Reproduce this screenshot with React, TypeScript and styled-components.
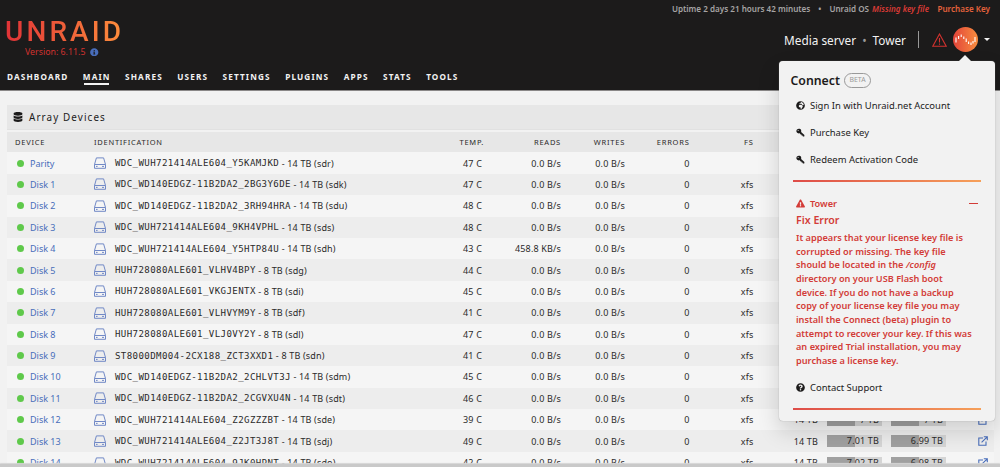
import React from 'react';
import styled, { createGlobalStyle, css } from 'styled-components';
import { FaDatabase, FaInfoCircle, FaExclamationTriangle, FaQuestionCircle, FaGlobeAfrica } from 'react-icons/fa';

interface Disk {
  name: string;
  model: string;
  info: string;
  temp: number;
  reads?: string;
  fs?: string;
  size?: string;
  used?: string;
  free?: string;
}

const disks: Disk[] = [
  { name: 'Parity', model: 'WDC_WUH721414ALE604_Y5KAMJKD', info: '14 TB (sdr)', temp: 47, fs: '' },
  { name: 'Disk 1', model: 'WDC_WD140EDGZ-11B2DA2_2BG3Y6DE', info: '14 TB (sdk)', temp: 47 },
  { name: 'Disk 2', model: 'WDC_WD140EDGZ-11B2DA2_3RH94HRA', info: '14 TB (sdu)', temp: 48 },
  { name: 'Disk 3', model: 'WDC_WUH721414ALE604_9KH4VPHL', info: '14 TB (sds)', temp: 48 },
  { name: 'Disk 4', model: 'WDC_WUH721414ALE604_Y5HTP84U', info: '14 TB (sdh)', temp: 43, reads: '458.8 KB/s' },
  { name: 'Disk 5', model: 'HUH728080ALE601_VLHV4BPY', info: '8 TB (sdg)', temp: 44 },
  { name: 'Disk 6', model: 'HUH728080ALE601_VKGJENTX', info: '8 TB (sdi)', temp: 45 },
  { name: 'Disk 7', model: 'HUH728080ALE601_VLHVYM9Y', info: '8 TB (sdf)', temp: 41 },
  { name: 'Disk 8', model: 'HUH728080ALE601_VLJ0VY2Y', info: '8 TB (sdl)', temp: 47 },
  { name: 'Disk 9', model: 'ST8000DM004-2CX188_ZCT3XXD1', info: '8 TB (sdn)', temp: 41 },
  { name: 'Disk 10', model: 'WDC_WD140EDGZ-11B2DA2_2CHLVT3J', info: '14 TB (sdm)', temp: 45 },
  { name: 'Disk 11', model: 'WDC_WD140EDGZ-11B2DA2_2CGVXU4N', info: '14 TB (sdt)', temp: 46 },
  { name: 'Disk 12', model: 'WDC_WUH721414ALE604_Z2GZZZBT', info: '14 TB (sde)', temp: 39, size: '14 TB', used: '7 TB', free: '7 TB' },
  { name: 'Disk 13', model: 'WDC_WUH721414ALE604_Z2JT3J8T', info: '14 TB (sdj)', temp: 49, size: '14 TB', used: '7.01 TB', free: '6.99 TB' },
  { name: 'Disk 14', model: 'WDC_WUH721414ALE604_9JK0HPNT', info: '14 TB (sdo)', temp: 42, size: '14 TB', used: '7.02 TB', free: '6.98 TB' },
];

const menu = ['Dashboard', 'Main', 'Shares', 'Users', 'Settings', 'Plugins', 'Apps', 'Stats', 'Tools'];

const GlobalStyle = createGlobalStyle`
  * {
    box-sizing: border-box;
  }

  body {
    margin: 0;
    background: #f2f2f2;
    color: #1c1b1b;
    font-family: 'Noto Sans', 'Open Sans', sans-serif;
    font-size: 9px;
    overflow: hidden;
  }
`;

const Page = styled.div`
  position: relative;
  height: 467px;
  overflow: hidden;
  display: flex;
  flex-direction: column;
`;

const Header = styled.header`
  flex: none;
  height: 91px;
  background: #1c1b1b;
  border-bottom: 1px solid #8a8888;
  display: flex;
  justify-content: space-between;
`;

const Brand = styled.div`
  padding: 14px 0 0 5px;
  display: flex;
  flex-direction: column;
`;

const Logo = styled.div`
  width: 122px;
  height: 32px;
  font-family: Roboto, sans-serif;
  font-size: 28px;
  font-weight: 500;
  line-height: 36px;
  letter-spacing: 3.1px;
  white-space: nowrap;
  color: transparent;
  background: linear-gradient(90deg, #e03237, #fd8c3c 95%);
  background-clip: text;
  -webkit-background-clip: text;
`;

const Version = styled.div`
  display: flex;
  align-items: center;
  gap: 5px;
  height: 12px;
  padding-left: 20px;
  font-size: 8.8px;
  color: #d1322f;

  svg {
    color: #486dba;
  }
`;

const Nav = styled.nav`
  display: flex;
  gap: 14.4px;
  margin-top: 12px;
  padding-left: 2px;
`;

const NavItem = styled.a<{ $active?: boolean }>`
  position: relative;
  font-size: 8.2px;
  font-weight: 700;
  line-height: 13px;
  letter-spacing: 1.15px;
  text-transform: uppercase;
  color: #f2f2f2;

  ${props => props.$active && css`
    &::after {
      content: '';
      position: absolute;
      left: 1.5px;
      right: 2px;
      bottom: -2px;
      height: 2px;
      background: #f2f2f2;
    }
  `}
`;

const Account = styled.div`
  display: flex;
  flex-direction: column;
  align-items: flex-end;
`;

const Uptime = styled.div`
  display: flex;
  align-items: center;
  height: 17px;
  padding-right: 10px;
  font-size: 8.1px;
  font-weight: 600;
  color: #a6a4a4;

  em {
    margin-left: 3px;
    color: #d83a35;
  }

  a {
    margin-left: 8.5px;
    color: #e3623c;
  }
`;

const Bullet = styled.span`
  margin: 0 8px;
`;

const ServerRow = styled.div`
  display: flex;
  align-items: center;
  height: 45px;
  padding-right: 10px;
  font-size: 11.8px;
  color: #f2f2f2;
`;

const Separator = styled.i`
  width: 1.5px;
  height: 17px;
  margin: 0 13px 0 11.5px;
  background: #999;
`;

const Dot = styled.span`
  margin: 0 6px;
  color: #999;
`;

const Avatar = styled.div`
  width: 25px;
  height: 25px;
  margin: 0 6px 0 6px;
  border-radius: 50%;
  background: linear-gradient(90deg, #e2443a, #f88d3e);
  display: flex;
  align-items: center;
  justify-content: center;
`;

const Caret = styled.i`
  border: 3px solid transparent;
  border-top: 3.5px solid #f2f2f2;
  border-bottom: 0;
`;

const Content = styled.main`
  flex: 1;
  min-height: 0;
  overflow: hidden;
  padding: 14px 6px 0 7px;
`;

const Title = styled.div`
  display: flex;
  align-items: center;
  gap: 6px;
  height: 25px;
  padding-left: 6px;
  margin-bottom: 2px;
  background: #e7e7e7;
  border-bottom: 1px solid #e1e1e1;
  font-size: 9.9px;
  letter-spacing: 1.1px;
`;

const Row = styled.div<{ $even?: boolean }>`
  display: grid;
  grid-template-columns: 87px 306px 82px 79px 64px 64.5px 64px 64.5px 64px 64px 1fr;
  align-items: center;
  height: 21.4px;
  letter-spacing: 0.16px;
  color: #2b2a2a;
  background: ${props => (props.$even ? '#ededed' : '#f5f5f5')};
`;

const HeadRow = styled(Row)`
  height: 20.4px;
  padding-bottom: 1px;
  background: #e7e7e7;
  font-size: 7.5px;
  letter-spacing: 0.75px;
  text-transform: uppercase;
`;

const Cell = styled.span<{ $right?: boolean }>`
  white-space: nowrap;
  text-align: ${props => (props.$right ? 'right' : 'left')};
`;

const HeadDevice = styled(Cell)`
  padding-left: 8px;
`;

const HeadTemp = styled(Cell)`
  margin-right: -2px;
`;

const Device = styled.div`
  display: flex;
  align-items: center;
  gap: 6px;
  padding-left: 10px;
  letter-spacing: 0;
  color: #486dba;
`;

const Online = styled.i`
  width: 7px;
  height: 7px;
  border-radius: 50%;
  background: #5fc94b;
`;

const Ident = styled.div`
  display: flex;
  align-items: center;
  white-space: pre;

  svg {
    margin-right: 9px;
  }
`;

const Model = styled.span`
  font-family: 'DejaVu Sans Mono', monospace;
  font-size: 9.1px;
  letter-spacing: 0.39px;
`;

const Usage = styled.div`
  width: 55.5px;
  height: 12px;
  margin-left: 8.5px;
  padding-right: 3px;
  background: linear-gradient(90deg, #a0a0a0 50%, #d5d5d5 50%);
  line-height: 12px;
  text-align: right;
`;

const ViewLink = styled.a`
  display: flex;
  justify-content: flex-end;
  padding-right: 6px;
`;

const Footer = styled.footer`
  flex: none;
  height: 3px;
  background: #c9c9c9;
  box-shadow: 0 -1px 1px #d5d5d5;
`;

const Dropdown = styled.aside`
  position: absolute;
  left: 779px;
  top: 61px;
  width: 216px;
  height: 360px;
  padding: 10px 14px 0;
  border-radius: 4px;
  background: #f2f2f2;
  box-shadow: 0 0 1px #888, 0 10px 22px rgba(0, 0, 0, 0.16);

  &::before {
    content: '';
    position: absolute;
    right: 24px;
    top: -6px;
    border: 6px solid transparent;
    border-top: 0;
    border-bottom-color: #f2f2f2;
  }
`;

const Connect = styled.h2`
  display: flex;
  align-items: center;
  gap: 4px;
  height: 19px;
  margin: 0 0 0 -2.5px;
  font-size: 12.3px;
  font-weight: 600;
`;

const Beta = styled.span`
  height: 15px;
  padding: 0 4.5px;
  border: 1.5px solid #999;
  border-radius: 8px;
  font-size: 6.9px;
  font-weight: 400;
  line-height: 12px;
  color: #999;
`;

const MenuItem = styled.a`
  display: flex;
  align-items: center;
  gap: 5px;
  height: 27px;
  padding-left: 3px;
  font-size: 9.45px;
`;

const MenuList = styled.div`
  padding-top: 2px;
`;

const Divider = styled.hr`
  height: 2px;
  margin: 7px 0 0;
  border: 0;
  background: linear-gradient(90deg, #de4c48, #f6a05a);
`;

const ErrorBox = styled.section`
  padding: 14px 3px 0;
  color: #d33c38;
  font-weight: 600;
`;

const ErrorHead = styled.div`
  display: flex;
  align-items: center;
  gap: 5px;
  height: 14px;
  font-size: 9.2px;
`;

const Minus = styled.i`
  width: 9px;
  height: 1px;
  margin-left: auto;
  background: #d33c38;
`;

const ErrorTitle = styled.h3`
  margin: 2px 0;
  font-size: 10.6px;
  font-weight: 600;
  line-height: 17px;
`;

const ErrorText = styled.p`
  margin: 0 0 6px;
  font-size: 9.2px;
  line-height: 13.65px;
  white-space: nowrap;
`;

const DiskIcon = () => (
  <svg width="12" height="12" viewBox="0 0 12 12" fill="none" stroke="#7189c6" strokeWidth="1">
    <path d="M0.5 7.5 2.4 0.9H9.6L11.5 7.5V11.3H0.5ZM0.5 7.5H11.5M2 9.4H3.6M8 9.4H10" />
  </svg>
);

const ExternalIcon = () => (
  <svg width="10" height="10" viewBox="0 0 10 10" fill="none" stroke="#486dba" strokeWidth="1.1">
    <path d="M5 2H0.8V9.3H8V5.5M3.6 6.4 9.2 0.8M5.8 0.7H9.3V4.2" />
  </svg>
);

const KeyIcon = () => (
  <svg width="9" height="9" viewBox="0 0 9 9">
    <path d="M1 1.5C2.2.3 4.3.5 5 1.8c.4.8.3 1.5.1 2.1L8.4 7 8.3 8.4 6.9 8.5 6.5 7.6 5.6 7.5 5.4 6.6 4.6 6.4 3.8 5.3C2.5 5.7 1.1 5.2.6 4 .2 3.1.4 2.1 1 1.5Z" fill="#1c1b1b" />
    <circle cx="2.1" cy="2.4" r="0.5" fill="#f2f2f2" />
  </svg>
);

const AlertIcon = () => (
  <svg width="15" height="14" viewBox="0 0 15 14" fill="none" stroke="#d1322f" strokeWidth="1.1">
    <path d="M7.5 1 14.2 13.2H0.8ZM7.5 5V9.6M7.5 10.6V11.7" />
  </svg>
);

const WaveIcon = () => (
  <svg width="21" height="14" viewBox="0 0 21 14" stroke="#fff" strokeWidth="1.1">
    <path d="M1 4.5V9.5M3.6 3V6M6.2 1.5V4M8.8 3.5V6M11.2 5.5V9M13.6 8.5V11M16 9.5V12M18 8V10.5M20 4V9" />
  </svg>
);

const App: React.FC = () => {
  return (
    <Page>
      <GlobalStyle />
      <Header>
        <Brand>
          <Logo>UNRAID</Logo>
          <Version>
            Version: 6.11.5
            <FaInfoCircle size={8.5} />
          </Version>
          <Nav>
            {menu.map(item => (
              <NavItem key={item} $active={item === 'Main'}>{item}</NavItem>
            ))}
          </Nav>
        </Brand>
        <Account>
          <Uptime>
            Uptime 2 days 21 hours 42 minutes
            <Bullet>•</Bullet>
            Unraid OS
            <em>Missing key file</em>
            <a>Purchase Key</a>
          </Uptime>
          <ServerRow>
            Media server
            <Dot>•</Dot>
            Tower
            <Separator />
            <AlertIcon />
            <Avatar>
              <WaveIcon />
            </Avatar>
            <Caret />
          </ServerRow>
        </Account>
      </Header>

      <Content>
        <Title>
          <FaDatabase size={10} />
          Array Devices
        </Title>
        <HeadRow>
          <HeadDevice>Device</HeadDevice>
          <Cell>Identification</Cell>
          <HeadTemp $right>Temp.</HeadTemp>
          <Cell $right>Reads</Cell>
          <Cell $right>Writes</Cell>
          <Cell $right>Errors</Cell>
          <Cell $right>FS</Cell>
        </HeadRow>
        {disks.map((disk, index) => (
          <Row key={disk.name} $even={index % 2 === 1}>
            <Device>
              <Online />
              {disk.name}
            </Device>
            <Ident>
              <DiskIcon />
              <Model>{disk.model}</Model>
              {` - ${disk.info}`}
            </Ident>
            <Cell $right>{disk.temp} C</Cell>
            <Cell $right>{disk.reads ?? '0.0 B/s'}</Cell>
            <Cell $right>0.0 B/s</Cell>
            <Cell $right>0</Cell>
            <Cell $right>{disk.fs ?? 'xfs'}</Cell>
            {disk.size && (
              <>
                <Cell $right>{disk.size}</Cell>
                <Usage>{disk.used}</Usage>
                <Usage>{disk.free}</Usage>
                <ViewLink>
                  <ExternalIcon />
                </ViewLink>
              </>
            )}
          </Row>
        ))}
      </Content>
      <Footer />

      <Dropdown>
        <Connect>
          Connect
          <Beta>BETA</Beta>
        </Connect>
        <MenuList>
          <MenuItem>
            <FaGlobeAfrica size={9} />
            Sign In with Unraid.net Account
          </MenuItem>
          <MenuItem>
            <KeyIcon />
            Purchase Key
          </MenuItem>
          <MenuItem>
            <KeyIcon />
            Redeem Activation Code
          </MenuItem>
        </MenuList>
        <Divider />
        <ErrorBox>
          <ErrorHead>
            <FaExclamationTriangle size={9} />
            Tower
            <Minus />
          </ErrorHead>
          <ErrorTitle>Fix Error</ErrorTitle>
          <ErrorText>
            It appears that your license key file is<br />
            corrupted or missing. The key file<br />
            should be located in the <em>/config</em><br />
            directory on your USB Flash boot<br />
            device. If you do not have a backup<br />
            copy of your license key file you may<br />
            install the Connect (beta) plugin to<br />
            attempt to recover your key. If this was<br />
            an expired Trial installation, you may<br />
            purchase a license key.
          </ErrorText>
        </ErrorBox>
        <MenuItem>
          <FaQuestionCircle size={9} />
          Contact Support
        </MenuItem>
        <Divider />
      </Dropdown>
    </Page>
  );
};

export default App;
